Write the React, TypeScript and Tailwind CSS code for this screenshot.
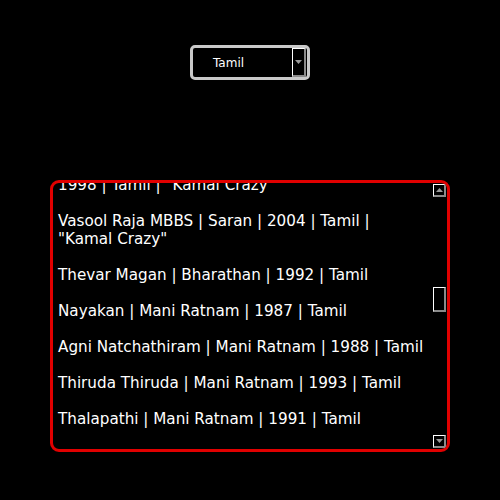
const FILMS: string[] = [
  'Kaathala Kaathala | Singeetam Srinivasa Rao | 1998 | Tamil | "Kamal Crazy"',
  'Vasool Raja MBBS | Saran | 2004 | Tamil | "Kamal Crazy"',
  'Thevar Magan | Bharathan | 1992 | Tamil',
  'Nayakan | Mani Ratnam | 1987 | Tamil',
  'Agni Natchathiram | Mani Ratnam | 1988 | Tamil',
  'Thiruda Thiruda | Mani Ratnam | 1993 | Tamil',
  'Thalapathi | Mani Ratnam | 1991 | Tamil',
];

function ArrowButton({ up, className }: { up?: boolean; className: string }) {
  return (
    <div
      className={`flex items-center justify-center bg-black border-t border-l border-t-white border-l-white border-r-2 border-b-2 border-r-[#8a8a8a] border-b-[#8a8a8a] ${className}`}
    >
      <svg width="7" height="4" viewBox="0 0 7 4">
        <polygon points={up ? '0,4 7,4 3.5,0' : '0,0 7,0 3.5,4'} fill="#9a9a9a" />
      </svg>
    </div>
  );
}

export default function App() {
  return (
    <div className="w-[500px] h-[500px] bg-black font-['DejaVu_Sans',sans-serif] text-white flex flex-col items-center">
      {/* Language select */}
      <div className="mt-[45px] w-[120px] h-[35px] border-[3px] border-[#c9c9c9] rounded-[5px] bg-black flex items-center justify-between">
        <span className="pl-[20px] text-[12px] leading-none">Tamil</span>
        <ArrowButton className="w-[14px] h-[29px] mr-[1px]" />
      </div>

      {/* Film list */}
      <div className="mt-[100px] w-[400px] h-[272px] border-[3px] border-[#e10000] rounded-[9px] flex overflow-hidden">
        <div className="flex-1 min-w-0 overflow-hidden pl-[5px]">
          <ul className="mt-[-25px] w-[366px] flex flex-col gap-[18px] text-[15.2px] leading-[18px]">
            {FILMS.map((f) => (
              <li key={f}>{f}</li>
            ))}
          </ul>
        </div>

        {/* Scrollbar */}
        <div className="w-[14px] flex flex-col py-[1px]">
          <ArrowButton up className="w-[13px] h-[13px]" />
          <div className="flex-1">
            <div className="mt-[90px] w-[13px] h-[25px] border-t border-l border-t-white border-l-white border-r-2 border-b-2 border-r-[#8a8a8a] border-b-[#8a8a8a]" />
          </div>
          <ArrowButton className="w-[13px] h-[13px]" />
        </div>
      </div>
    </div>
  );
}
